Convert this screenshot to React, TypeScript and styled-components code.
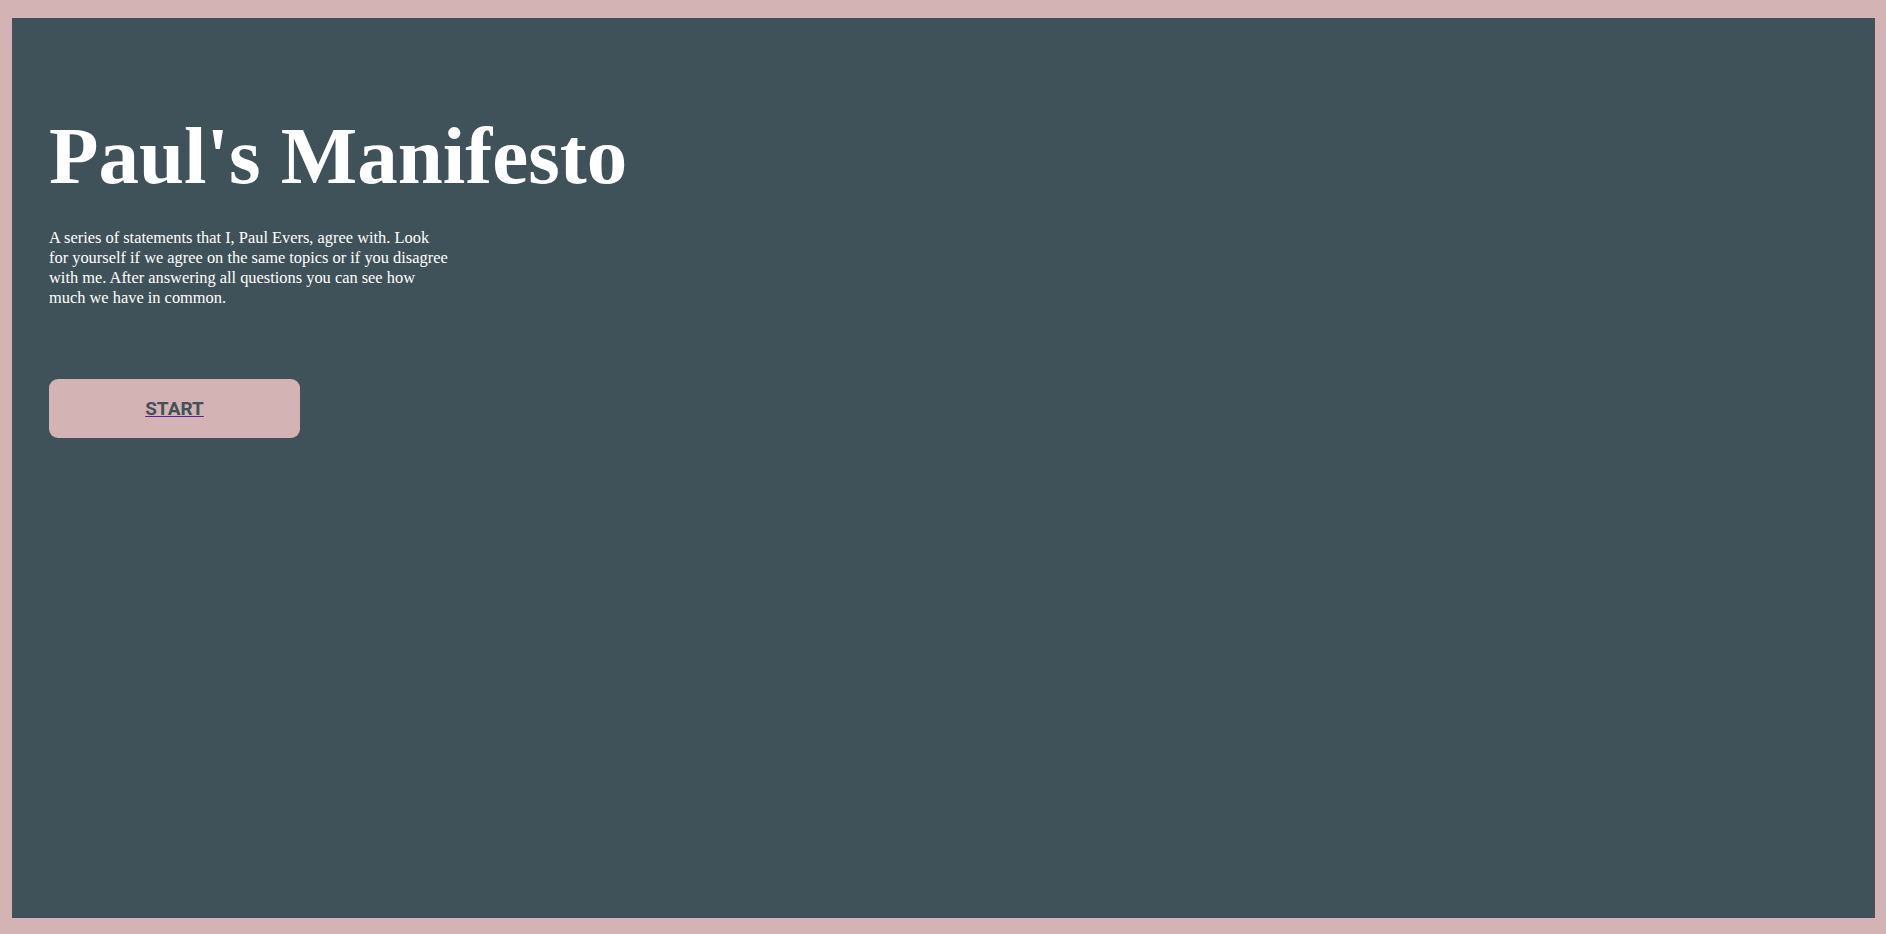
import React from "react";
import styled, { createGlobalStyle } from "styled-components";

const Global = createGlobalStyle`
  html, body {
    margin: 0;
    padding: 0;
    background: #d4b3b5;
  }
  #root {
    min-height: 100vh;
  }
`;

const Frame = styled.div`
  box-sizing: border-box;
  height: 934px;
  padding: 18px 11px 16px 12px;
  background: #d4b3b5;
  display: flex;
`;

const Panel = styled.main`
  flex: 1;
  background: #405259;
  padding: 98px 37px 0;
  display: flex;
  flex-direction: column;
  align-items: flex-start;
`;

const Title = styled.h1`
  margin: 0;
  font-family: "Liberation Serif", "Times New Roman", serif;
  font-weight: 700;
  font-size: 81px;
  line-height: 1;
  color: #ffffff;
`;

const Intro = styled.p`
  margin: 31px 0 0;
  font-family: "Liberation Serif", "Times New Roman", serif;
  font-size: 16.4px;
  line-height: 20px;
  color: #ffffff;
  white-space: pre-line;
`;

const StartLink = styled.a`
  margin-top: 71px;
  box-sizing: border-box;
  width: 251px;
  height: 59px;
  border-radius: 9px;
  background: #d4b3b5;
  display: flex;
  align-items: center;
  justify-content: center;
  font-family: Roboto, "Liberation Sans", sans-serif;
  font-weight: 700;
  font-size: 19px;
  color: #405259;
  text-decoration: underline;
  text-decoration-color: #5a1f9c;
  text-decoration-thickness: 1px;
  cursor: pointer;
`;

export default function App() {
  return (
    <>
      <Global />
      <Frame>
        <Panel>
          <Title>Paul's Manifesto</Title>
          <Intro>
            {"A series of statements that I, Paul Evers, agree with. Look\nfor yourself if we agree on the same topics or if you disagree\nwith me. After answering all questions you can see how\nmuch we have in common."}
          </Intro>
          <StartLink href="#">START</StartLink>
        </Panel>
      </Frame>
    </>
  );
}
